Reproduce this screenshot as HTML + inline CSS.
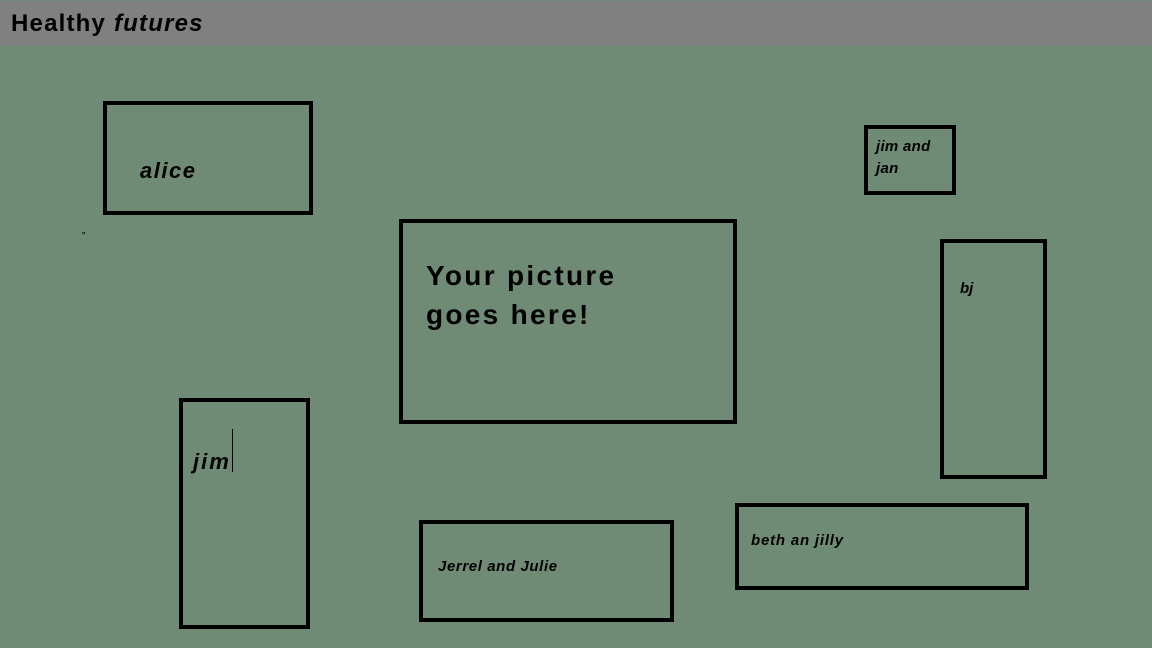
<!DOCTYPE html>
<html><head><style>
body{margin:0;width:1152px;height:648px;background:#6f8b75;position:relative;overflow:hidden;font-family:"Liberation Sans",sans-serif;font-weight:bold;color:#000}
.h{position:absolute;left:0;top:1px;width:1152px;height:45px;background:#808080}
.h span{position:absolute;left:11px;top:9px;font-size:24px;letter-spacing:1.2px}
.b{position:absolute;border:4px solid #000;box-sizing:border-box}
.t{position:absolute;font-style:italic;white-space:nowrap}
</style></head><body>
<div class="h"><span>Healthy <i>futures</i></span></div>
<div class="b" style="left:103px;top:101px;width:210px;height:114px"></div>
<div class="t" style="left:140px;top:158px;font-size:22px;letter-spacing:1.5px">alice</div>
<div class="b" style="left:864px;top:125px;width:92px;height:70px"></div>
<div class="t" style="left:876px;top:136px;font-size:15px;line-height:22px;letter-spacing:0.3px">jim and<br>jan</div>
<div class="b" style="left:399px;top:219px;width:338px;height:205px"></div>
<div style="position:absolute;left:426px;top:256px;font-size:28px;line-height:39px;letter-spacing:2.3px">Your picture<br>goes here!</div>
<div class="b" style="left:940px;top:239px;width:107px;height:240px"></div>
<div class="t" style="left:960px;top:280px;font-size:15px">bj</div>
<div class="b" style="left:179px;top:398px;width:131px;height:231px"></div>
<div class="t" style="left:193px;top:449px;font-size:22px;letter-spacing:2px">jim</div>
<div style="position:absolute;left:232px;top:429px;width:1px;height:43px;background:#000"></div>
<div class="b" style="left:419px;top:520px;width:255px;height:102px"></div>
<div class="t" style="left:438px;top:558px;font-size:15px;letter-spacing:0.6px">Jerrel and Julie</div>
<div class="b" style="left:735px;top:503px;width:294px;height:87px"></div>
<div class="t" style="left:751px;top:532px;font-size:15px;letter-spacing:0.8px">beth an jilly</div>
<div style="position:absolute;left:82px;top:231px;font-size:10px;font-weight:normal">"</div>
</body></html>
